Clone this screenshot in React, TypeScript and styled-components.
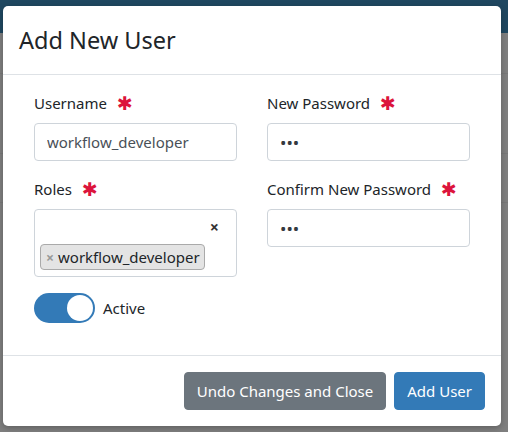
import React from 'react';
import styled, { createGlobalStyle } from 'styled-components';

const GlobalStyle = createGlobalStyle`
  html, body {
    margin: 0;
    padding: 0;
    width: 508px;
    height: 432px;
    overflow: hidden;
  }
  * {
    box-sizing: border-box;
  }
`;

const Page = styled.div`
  position: relative;
  width: 508px;
  height: 432px;
  background: #7f7f7f;
  font-family: "Noto Sans", "Open Sans", sans-serif;
`;

const Navbar = styled.div`
  height: 33px;
  background: #1f4760;
`;

const BackdropRow = styled.div<{ $h: number }>`
  height: ${(p) => p.$h}px;
  border-bottom: 1px solid #787878;
`;

const Modal = styled.div`
  position: absolute;
  top: 6px;
  left: 3px;
  width: 498px;
  display: flex;
  flex-direction: column;
  background: #fff;
  border-radius: 5px;
  box-shadow: 0 2px 6px rgba(0, 0, 0, 0.25);
  color: #212529;
`;

const Header = styled.div`
  padding: 16px;
  border-bottom: 1px solid #dee2e6;
`;

const Title = styled.h4`
  margin: 0;
  font-size: 23.5px;
  line-height: 36px;
  font-weight: 400;
`;

const Body = styled.div`
  padding: 16px 31px;
  display: grid;
  grid-template-columns: 1fr 1fr;
  column-gap: 30px;
`;

const Column = styled.div`
  display: flex;
  flex-direction: column;
`;

const FormGroup = styled.div`
  margin-bottom: 16px;
`;

const Label = styled.label`
  display: flex;
  align-items: center;
  gap: 10px;
  margin-bottom: 8px;
  font-size: 15px;
  line-height: 24px;
  color: #212529;
`;

const Required = styled.span`
  color: #dc143c;
  font-size: 19px;
  line-height: 1;
  font-family: "DejaVu Sans", sans-serif;
`;

const Input = styled.input`
  display: block;
  width: 100%;
  height: 38px;
  padding: 6px 12px;
  border: 1px solid #ced4da;
  border-radius: 4px;
  font-family: inherit;
  font-size: 15px;
  line-height: 24px;
  color: #495057;
  background: #fff;
  outline: none;

  &[type='password'] {
    font-size: 17px;
    color: #343a40;
  }
`;

const MultiSelect = styled.div`
  position: relative;
  height: 68px;
  border: 1px solid #ced4da;
  border-radius: 4px;
  padding: 34px 5px 5px 5px;
`;

const ClearAll = styled.span`
  position: absolute;
  top: 9px;
  right: 17px;
  font-size: 16px;
  font-weight: 700;
  line-height: 1;
  color: #333;
`;

const Tag = styled.span`
  display: inline-flex;
  align-items: center;
  height: 26px;
  padding: 0 4px 0 5px;
  background: #e4e4e4;
  border: 1px solid #aaa;
  border-radius: 4px;
  font-size: 15px;
  color: #212529;
`;

const TagRemove = styled.span`
  color: #999;
  font-weight: 700;
  margin-right: 4px;
  font-size: 14px;
`;

const SwitchRow = styled.div`
  display: flex;
  align-items: center;
  gap: 8px;
  margin-bottom: 16px;
  font-size: 15px;
`;

const SwitchTrack = styled.span<{ $on: boolean }>`
  position: relative;
  display: inline-block;
  width: 61px;
  height: 30px;
  border-radius: 15px;
  background: ${(p) => (p.$on ? '#337ab7' : '#ccc')};
`;

const SwitchKnob = styled.span<{ $on: boolean }>`
  position: absolute;
  top: 2px;
  left: ${(p) => (p.$on ? '33px' : '2px')};
  width: 26px;
  height: 26px;
  border-radius: 50%;
  background: #fff;
`;

const Footer = styled.div`
  display: flex;
  justify-content: flex-end;
  align-items: center;
  gap: 8px;
  padding: 16px;
  border-top: 1px solid #dee2e6;
`;

const Button = styled.button<{ $variant: 'secondary' | 'primary' }>`
  height: 38px;
  padding: 6px 12px;
  border: 1px solid ${(p) => (p.$variant === 'primary' ? '#337ab7' : '#6c757d')};
  border-radius: 4px;
  background: ${(p) => (p.$variant === 'primary' ? '#337ab7' : '#6c757d')};
  color: #fff;
  font-family: inherit;
  font-size: 15px;
  line-height: 24px;
`;

export default function App() {
  return (
    <Page>
      <GlobalStyle />
      <Navbar />
      <BackdropRow $h={41} />
      <BackdropRow $h={80} />
      <BackdropRow $h={49} />
      <Modal>
        <Header>
          <Title>Add New User</Title>
        </Header>
        <Body>
          <Column>
            <FormGroup>
              <Label>
                Username <Required>✱</Required>
              </Label>
              <Input type="text" defaultValue="workflow_developer" />
            </FormGroup>
            <FormGroup>
              <Label>
                Roles <Required>✱</Required>
              </Label>
              <MultiSelect>
                <ClearAll>×</ClearAll>
                <Tag>
                  <TagRemove>×</TagRemove>workflow_developer
                </Tag>
              </MultiSelect>
            </FormGroup>
            <SwitchRow>
              <SwitchTrack $on>
                <SwitchKnob $on />
              </SwitchTrack>
              Active
            </SwitchRow>
          </Column>
          <Column>
            <FormGroup>
              <Label>
                New Password <Required>✱</Required>
              </Label>
              <Input type="password" defaultValue="abc" />
            </FormGroup>
            <FormGroup>
              <Label>
                Confirm New Password <Required>✱</Required>
              </Label>
              <Input type="password" defaultValue="abc" />
            </FormGroup>
          </Column>
        </Body>
        <Footer>
          <Button $variant="secondary">Undo Changes and Close</Button>
          <Button $variant="primary">Add User</Button>
        </Footer>
      </Modal>
    </Page>
  );
}
